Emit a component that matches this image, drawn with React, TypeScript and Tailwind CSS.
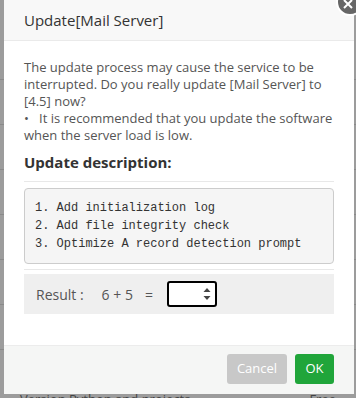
import React from "react";

export default function App() {
  return (
    <div className="relative w-[356px] h-[398px] overflow-hidden bg-[#9c9c9c]" style={{ fontFamily: "'Open Sans', 'Noto Sans', sans-serif" }}>
      {/* background page fragments */}
      <div className="flex flex-col text-[13px] text-[#333] pt-[35px]">
        <div className="h-[45px] border-b border-[#8a8a8a]" />
        <div className="h-[45px] border-b border-[#8a8a8a]" />
        <div className="h-[45px] border-b border-[#8a8a8a]" />
        <div className="h-[45px] border-b border-[#8a8a8a]" />
        <div className="h-[45px] border-b border-[#8a8a8a]" />
        <div className="h-[45px] border-b border-[#8a8a8a]" />
        <div className="h-[45px] border-b border-[#8a8a8a]" />
        <div className="pl-[20px] flex justify-between pr-[20px] text-[#444] mt-[40px] leading-[18px]"><span>Version Python and projects</span><span>Free</span></div>
      </div>

      {/* modal */}
      <div className="absolute left-[4px] top-[-10px] w-[350px] h-[404px] bg-white flex flex-col">
        <div className="h-[51px] bg-[#f8f8f8] border-b border-[#eaeaea] flex items-end pb-[9px] pl-[20px] text-[15px] text-[#333]">
          Update[Mail Server]
        </div>
        <div className="flex-1 px-[20px] pt-[18px] text-[13px] leading-[17px] text-[#555]">
          <p>The update process may cause the service to be interrupted. Do you really update [Mail Server] to [4.5] now?</p>
          <p>•&nbsp;&nbsp;&nbsp;It is recommended that you update the software when the server load is low.</p>
          <div className="mt-[8px] pb-[9px] border-b border-[#e8e8e8] text-[15px] font-bold text-[#333] leading-[20px]">Update description:</div>
          <div className="mt-[6px] border border-[#cccccc] rounded-[4px] bg-[#f5f5f5] px-[10px] py-[10px] text-[12px] leading-[18px] text-[#333]" style={{ fontFamily: "'Liberation Mono', monospace" }}>
            <div>1. Add initialization log</div>
            <div>2. Add file integrity check</div>
            <div>3. Optimize A record detection prompt</div>
          </div>
          <div className="mt-[5px] border-t border-[#e8e8e8]" />
          <div className="mt-[4px] h-[40px] bg-[#efefef] flex items-center pl-[12px] text-[14px] text-[#555]">
            <span>Result :</span>
            <span className="ml-[18px]">6 + 5</span>
            <span className="ml-[12px]">=</span>
            <div className="ml-[14px] w-[50px] h-[26px] border-2 border-black rounded-[3px] bg-white flex justify-end items-center pr-[4px]">
              <svg width="8" height="16" viewBox="0 0 8 16">
                <path d="M0.5 6 L4 2 L7.5 6 Z" fill="#444" />
                <path d="M0.5 10 L4 14 L7.5 10 Z" fill="#444" />
              </svg>
            </div>
          </div>
        </div>
        <div className="h-[49px] bg-[#f5f6f5] border-t border-[#ececec] flex items-start justify-end gap-[8px] pr-[20px] pt-[8px]">
          <button className="h-[30px] w-[60px] px-0 rounded-[3px] bg-[#c8c8c8] text-white text-[13px]">Cancel</button>
          <button className="h-[30px] w-[39px] px-0 rounded-[3px] bg-[#20a53a] text-white text-[13px]">OK</button>
        </div>
      </div>

      {/* close button */}
      <div className="absolute left-[336px] top-[-12px] w-[28px] h-[28px] rounded-full bg-[#666] border-2 border-white flex items-center justify-center">
        <svg width="12" height="12" viewBox="0 0 12 12" className="mt-[4px] mr-[4px]">
          <path d="M2 2 L10 10 M10 2 L2 10" stroke="white" strokeWidth="2" />
        </svg>
      </div>
    </div>
  );
}
